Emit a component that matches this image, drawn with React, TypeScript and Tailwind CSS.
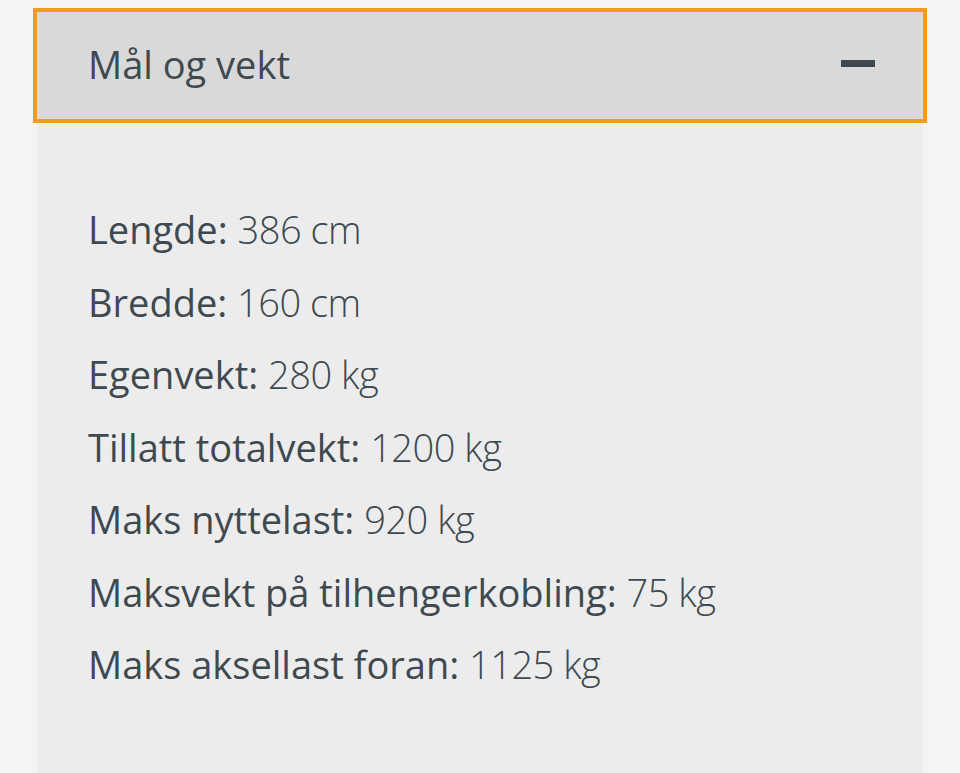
const rows: [string, string][] = [
  ['Lengde:', '386 cm'],
  ['Bredde:', '160 cm'],
  ['Egenvekt:', '280 kg'],
  ['Tillatt totalvekt:', '1200 kg'],
  ['Maks nyttelast:', '920 kg'],
  ['Maksvekt på tilhengerkobling:', '75 kg'],
  ['Maks aksellast foran:', '1125 kg'],
];

export default function App() {
  return (
    <div className="min-h-[773px] bg-[#f4f4f4] pt-2 font-['Open_Sans',sans-serif] text-[#3e4950]">
      <div className="mx-[37px] min-h-[765px] bg-[#ececec]">
        <div className="-mx-1 flex h-[115px] items-center justify-between border-4 border-[#f39c1c] bg-[#d9d9d9] pl-[51px] pr-[48px]">
          <span className="-mt-1 text-[38px] leading-none">Mål og vekt</span>
          <span className="-mt-1 block h-[7px] w-[34px] bg-[#3e4950]" />
        </div>
        <div className="px-[51px] pt-[70px] pb-[70px]">
          {rows.map(([k, v]) => (
            <div key={k} className="text-[38px] leading-[72.5px] whitespace-nowrap">
              <span className="font-medium">{k}</span>{' '}
              <span className="font-light tracking-[-0.5px]">{v}</span>
            </div>
          ))}
        </div>
      </div>
    </div>
  );
}
